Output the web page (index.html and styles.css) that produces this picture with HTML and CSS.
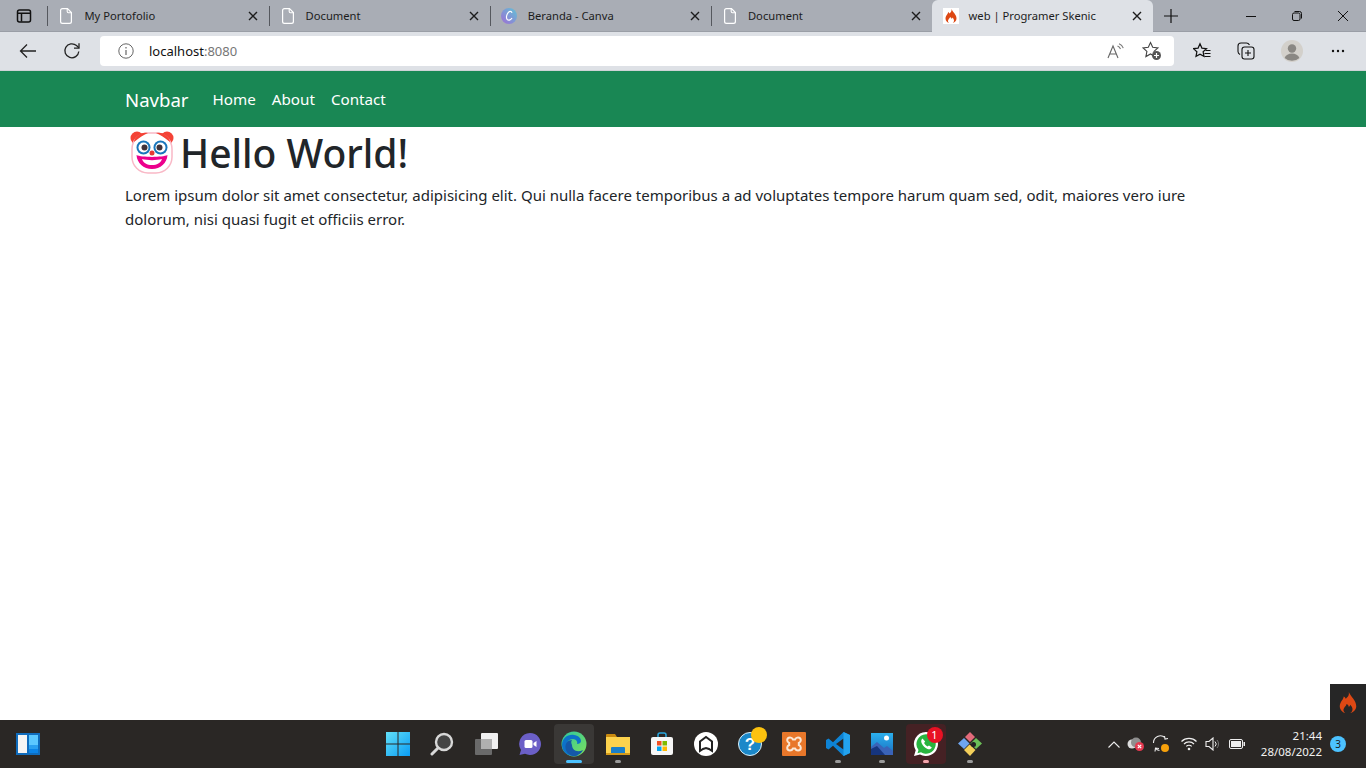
FILE: index.html
```html
<!DOCTYPE html>
<html>
<head>
<meta name="viewport" content="width=device-width, initial-scale=1">
<title>web | Programer Skenic</title>
<link rel="stylesheet" href="styles.css">
</head>
<body>

<svg class="defs" width="0" height="0">
  <symbol id="doc" viewBox="0 0 12 16"><path d="M2.5.6h5L11.4 4.5v9a1.9 1.9 0 0 1-1.9 1.9h-7A1.9 1.9 0 0 1 .6 13.5v-11A1.9 1.9 0 0 1 2.5.6z" fill="none" stroke="#fff" stroke-width="1.2"/><path d="M7.2.6v3a1.2 1.2 0 0 0 1.2 1.2h3" fill="none" stroke="#fff" stroke-width="1.1"/></symbol>
  <symbol id="close" viewBox="0 0 10 10"><path d="M1 1l8 8M9 1L1 9" fill="none" stroke="#1c1c1c" stroke-width="1.4"/></symbol>
</svg>

<!-- browser tabs -->
<div class="tabstrip">
  <div class="tab-menu">
    <svg width="16" height="16" viewBox="0 0 16 16"><rect x="1.5" y="2" width="13" height="12" rx="2" fill="none" stroke="#111" stroke-width="1.5"/><path d="M2 5.2h12M5.5 5v8.5" stroke="#111" stroke-width="1.5"/></svg>
  </div>
  <div class="tab">
    <svg class="favicon-doc" width="12" height="16"><use href="#doc"/></svg>
    <span class="tab-title">My Portofolio</span>
    <svg class="tab-close" width="10" height="10"><use href="#close"/></svg>
  </div>
  <div class="tab">
    <svg class="favicon-doc" width="12" height="16"><use href="#doc"/></svg>
    <span class="tab-title">Document</span>
    <svg class="tab-close" width="10" height="10"><use href="#close"/></svg>
  </div>
  <div class="tab">
    <svg class="favicon" width="16" height="16" viewBox="0 0 16 16">
      <defs><linearGradient id="canva" x1="0" y1="1" x2="1" y2="0"><stop offset="0" stop-color="#a06cd5"/><stop offset="1" stop-color="#5fc3d6"/></linearGradient></defs>
      <circle cx="8" cy="8" r="8" fill="url(#canva)"/>
      <path d="M11 4.800C10.500 3 8.500 3 7 4.800 5.400 6.800 4.800 10.500 6.500 11.800c1.500 1 3.500-.2 4.500-1.800" fill="none" stroke="#fff" stroke-width="1.2"/>
    </svg>
    <span class="tab-title">Beranda - Canva</span>
    <svg class="tab-close" width="10" height="10"><use href="#close"/></svg>
  </div>
  <div class="tab">
    <svg class="favicon-doc" width="12" height="16"><use href="#doc"/></svg>
    <span class="tab-title">Document</span>
    <svg class="tab-close" width="10" height="10"><use href="#close"/></svg>
  </div>
  <div class="tab tab-active">
    <span class="favicon-box">
      <svg width="12" height="14" viewBox="0 0 24 28"><path d="M13 0c1 5-2 7-4 9C8 7 7 6 6 6c1 3-5 7-5 13 0 5 4 8 7 9-2-2-3-4-1-7 1-2 3-3 3-5 2 1 3 2 3 4 1-1 2-2 2-3 2 2 3 4 3 6 0 2-1 4-3 5 4-1 8-4 8-9 0-8-7-12-10-19z" fill="#dd4814"/></svg>
    </span>
    <span class="tab-title">web | Programer Skenic</span>
    <svg class="tab-close" width="10" height="10"><use href="#close"/></svg>
  </div>
  <div class="new-tab">
    <svg width="16" height="16" viewBox="0 0 16 16"><path d="M8 1v14M1 8h14" stroke="#111" stroke-width="1.2"/></svg>
  </div>
  <div class="window-controls">
    <div class="win-btn"><svg width="10" height="10" viewBox="0 0 10 10"><path d="M0 5.5h10" stroke="#111"/></svg></div>
    <div class="win-btn"><svg width="10" height="10" viewBox="0 0 10 10"><rect x=".5" y="2" width="7.5" height="7.5" rx="1.5" fill="none" stroke="#111"/><path d="M2.5 .5h5a2 2 0 0 1 2 2v5" fill="none" stroke="#111"/></svg></div>
    <div class="win-btn"><svg width="10" height="10" viewBox="0 0 10 10"><path d="M0 0l10 10M10 0L0 10" stroke="#111"/></svg></div>
  </div>
</div>

<!-- address bar -->
<div class="toolbar">
  <div class="tool-btn">
    <svg width="18" height="16" viewBox="0 0 18 16"><path d="M17 8H1.5M8 1.500L1.500 8 8 14.500" fill="none" stroke="#222" stroke-width="1.3"/></svg>
  </div>
  <div class="tool-btn">
    <svg width="18" height="18" viewBox="0 0 18 18"><path d="M15.800 9.500A7 7 0 1 1 13.500 3.600L15.800 5.800" fill="none" stroke="#222" stroke-width="1.3"/><path d="M16 1.200v5h-5" fill="none" stroke="#222" stroke-width="1.3"/></svg>
  </div>
  <div class="address">
    <svg class="info" width="16" height="16" viewBox="0 0 16 16"><circle cx="8" cy="8" r="7.2" fill="none" stroke="#666" stroke-width="1"/><path d="M8 7v5M8 4v1.5" stroke="#666" stroke-width="1.2"/></svg>
    <span class="url">localhost<span class="url-port">:8080</span></span>
    <div class="address-icons">
      <svg width="18" height="16" viewBox="0 0 18 16"><path d="M1 15L6 3l5 12M2.800 11h6.400" fill="none" stroke="#666" stroke-width="1.1"/><path d="M10.500 3c1.400.6 2.400 1.600 3 3M12 .8c2 .8 3.500 2.300 4.300 4.300" fill="none" stroke="#777" stroke-width="1.1"/></svg>
      <svg width="20" height="20" viewBox="0 0 20 20"><path d="M8.500 1.500l2.200 4.800 5.200.6-3.900 3.500 1 5.200-4.500-2.600-4.600 2.600 1-5.200L1.100 6.900l5.200-.6z" fill="none" stroke="#444" stroke-width="1.1"/><circle cx="14.5" cy="14.5" r="4.5" fill="#555"/><path d="M14.500 12v5M12 14.500h5" stroke="#fff" stroke-width="1.2"/></svg>
    </div>
  </div>
  <div class="tool-group">
    <div class="tool-btn">
      <svg width="18" height="18" viewBox="0 0 18 18"><path d="M7 1.800l1.900 4.300 4.600.5-3.400 3.100.9 4.600L7 12.100l-4 2.200.9-4.600L.5 6.600l4.600-.5z" fill="none" stroke="#111" stroke-width="1.2"/><path d="M12.500 8.500h5M11.500 11.500h6M11.500 14.500h6" stroke="#111"/></svg>
    </div>
    <div class="tool-btn">
      <svg width="18" height="18" viewBox="0 0 18 18"><rect x="5" y="5" width="12" height="12" rx="2.5" fill="none" stroke="#111" stroke-width="1.1"/><path d="M11 8v6M8 11h6" stroke="#111" stroke-width="1.1"/><path d="M3 12.500C1.800 11.800 1 10.800 1 9.500V4a3 3 0 0 1 3-3h5.500c1.300 0 2.300.8 3 2" fill="none" stroke="#111" stroke-width="1.1"/></svg>
    </div>
    <div class="tool-btn avatar-btn">
      <svg width="22" height="22" viewBox="0 0 22 22"><circle cx="11" cy="11" r="11" fill="#d3d0cb"/><circle cx="11" cy="8.5" r="4.2" fill="#8a8783"/><path d="M3.600 18c1-3 4-4.500 7.400-4.500s6.400 1.500 7.400 4.500a11 11 0 0 1-14.800 0z" fill="#8a8783"/></svg>
    </div>
    <div class="tool-btn">
      <svg width="14" height="4" viewBox="0 0 14 4"><circle cx="2" cy="2" r="1.2" fill="#111"/><circle cx="7" cy="2" r="1.2" fill="#111"/><circle cx="12" cy="2" r="1.2" fill="#111"/></svg>
    </div>
  </div>
</div>

<!-- page -->
<nav class="navbar">
  <div class="container navbar-inner">
    <a class="navbar-brand">Navbar</a>
    <a class="nav-link">Home</a>
    <a class="nav-link">About</a>
    <a class="nav-link">Contact</a>
  </div>
</nav>

<main class="container page">
  <h1 class="title">
    <svg class="clown" width="44" height="44" viewBox="0 0 44 44">
      <circle cx="7" cy="8" r="6.5" fill="#f44336"/>
      <circle cx="37" cy="8" r="6.5" fill="#f44336"/>
      <rect x="2" y="3" width="40" height="40" rx="16" fill="#fff" stroke="#f9b8c6" stroke-width="1.5"/>
      <path d="M8 5.500C10 3 14 2.500 18 3 13 5 9 8 4 12 4 9 6 7 8 5.500zM36 5.500C34 3 30 2.500 26 3c5 2 9 5 14 9 0-3-2-5-4-6.500z" fill="#f44336"/>
      <circle cx="13.5" cy="17.5" r="7" fill="#1976bc"/><circle cx="13.5" cy="17.5" r="5" fill="#fff"/><circle cx="14.5" cy="17.5" r="3" fill="#40333a"/>
      <circle cx="30.5" cy="17.5" r="7" fill="#1976bc"/><circle cx="30.5" cy="17.5" r="5" fill="#fff"/><circle cx="29.5" cy="17.5" r="3" fill="#40333a"/>
      <circle cx="22" cy="23" r="2.5" fill="#e53935"/>
      <path d="M6.500 25c5 2.500 26 2.500 31 0-.5 8-7 14-15.500 14S7 33 6.500 25z" fill="#ec008c"/>
      <path d="M12 29c5 1.500 15 1.500 20 0-1.500 4-5 6-10 6s-8.500-2-10-6z" fill="#fff"/>
    </svg><span>Hello World!</span>
  </h1>
  <p class="lead">Lorem ipsum dolor sit amet consectetur, adipisicing elit. Qui nulla facere temporibus a ad voluptates tempore harum quam sed, odit, maiores vero iure dolorum, nisi quasi fugit et officiis error.</p>
</main>

<!-- debug toolbar button, sits over the page -->
<div class="debug-btn">
  <svg width="18" height="21" viewBox="0 0 24 28"><path d="M13 0c1 5-2 7-4 9C8 7 7 6 6 6c1 3-5 7-5 13 0 5 4 8 7 9-2-2-3-4-1-7 1-2 3-3 3-5 2 1 3 2 3 4 1-1 2-2 2-3 2 2 3 4 3 6 0 2-1 4-3 5 4-1 8-4 8-9 0-8-7-12-10-19z" fill="#dd4814"/></svg>
</div>

<!-- windows taskbar -->
<footer class="taskbar">
  <div class="task-left">
    <svg width="24" height="22" viewBox="0 0 24 22"><rect width="24" height="22" fill="#0f6cbd"/><rect x="2" y="2" width="9" height="18" fill="#f4f4f4"/><rect x="13" y="2" width="9" height="10" fill="#5cc8ff"/><rect x="13" y="12" width="9" height="4" fill="#2aa0f0"/><rect x="13" y="16" width="9" height="4" fill="#0a84e8"/></svg>
  </div>
  <div class="task-center">
    <div class="task-item">
      <svg width="24" height="24" viewBox="0 0 24 24"><defs><linearGradient id="win" x1="0" y1="0" x2="1" y2="1"><stop offset="0" stop-color="#62e0f8"/><stop offset="1" stop-color="#0a9cf5"/></linearGradient></defs><path d="M0 0h11.500v11.500H0zM12.500 0H24v11.500H12.500zM0 12.500h11.500V24H0zM12.500 12.500H24V24H12.500z" fill="url(#win)"/></svg>
    </div>
    <div class="task-item">
      <svg width="24" height="24" viewBox="0 0 24 24"><circle cx="14" cy="10" r="8" fill="#444" stroke="#d8d8d8" stroke-width="2.4"/><path d="M8 16l-6 6" stroke="#d8d8d8" stroke-width="3" stroke-linecap="round"/></svg>
    </div>
    <div class="task-item">
      <svg width="24" height="24" viewBox="0 0 24 24"><rect x="1" y="7" width="17" height="16" rx="1" fill="#6a6a6a"/><rect x="7" y="1" width="17" height="16" rx="1" fill="#f0f0f0"/><rect x="7" y="7" width="11" height="10" fill="#b0b0b0"/></svg>
    </div>
    <div class="task-item">
      <svg width="24" height="24" viewBox="0 0 24 24"><path d="M12 1a11 11 0 1 1-5 20.800L1.500 23 3 18A11 11 0 0 1 12 1z" fill="#6b5fc7"/><rect x="6.5" y="8" width="8" height="8" rx="1.5" fill="#fff"/><path d="M15.500 11l3-2v6l-3-2z" fill="#fff"/></svg>
    </div>
    <div class="task-item task-active">
      <svg width="26" height="26" viewBox="0 0 26 26"><defs><linearGradient id="edge" x1="0" y1="0" x2="1" y2="1"><stop offset="0" stop-color="#2ec7a0"/><stop offset="1" stop-color="#7de05a"/></linearGradient></defs><circle cx="13" cy="13" r="12.5" fill="url(#edge)"/><path d="M1 14C1 7 7 3 13 4c4 .5 7 3 7 6 0 2-2 3-4 3 1-2-1-5-4-5-5 0-7 4-6 9s6 8 12 7c-3 1.500-6 1.500-9 .5C4 23 1 19 1 14z" fill="#0d72c9"/><path d="M11 14c0 5 5 8 11 5-2 4-6 6-10 6-4-1-7-4-7.500-8C4 12 7 9 11 9c-1 1-1 3 0 5z" fill="#1558a8"/></svg>
      <span class="run-bar run-bar-long"></span>
    </div>
    <div class="task-item">
      <svg width="26" height="24" viewBox="0 0 26 24"><path d="M1 3a1 1 0 0 1 1-1h8l2 3h-11z" fill="#c98a10"/><rect x="1" y="5" width="24" height="18" fill="#fcd24d"/><rect x="6" y="15" width="14" height="8" rx="1" fill="#1a7fc9"/><rect x="1" y="21" width="24" height="2" fill="#d49a1a"/></svg>
      <span class="run-bar"></span>
    </div>
    <div class="task-item">
      <svg width="24" height="24" viewBox="0 0 24 24"><path d="M8 6V3a2 2 0 0 1 2-2h4a2 2 0 0 1 2 2v3" fill="none" stroke="#29a8e0" stroke-width="1.5"/><rect x="1" y="5" width="22" height="18" rx="2" fill="#f6f6f6"/><rect x="7" y="9" width="4.5" height="4.5" fill="#f25022"/><rect x="12.5" y="9" width="4.5" height="4.5" fill="#7fba00"/><rect x="7" y="14.5" width="4.5" height="4.5" fill="#00a4ef"/><rect x="12.5" y="14.5" width="4.5" height="4.5" fill="#ffb900"/></svg>
    </div>
    <div class="task-item">
      <svg width="24" height="24" viewBox="0 0 24 24"><circle cx="12" cy="12" r="12" fill="#fff"/><path d="M6 19V9.500L12 5l6 4.500V19l-3-2-3-1-3 1z" fill="none" stroke="#222" stroke-width="2"/></svg>
    </div>
    <div class="task-item">
      <svg width="24" height="24" viewBox="0 0 24 24"><circle cx="12" cy="12" r="11.5" fill="#1b88c9" stroke="#dff2fb" stroke-width="1"/><text x="12" y="18" class="help-mark">?</text></svg>
      <span class="help-dot"></span>
    </div>
    <div class="task-item">
      <svg width="24" height="24" viewBox="0 0 24 24"><rect width="24" height="24" rx="1" fill="#e8772a"/><path d="M8 5.500c1.500 0 2.500 1 3 2h2c.5-1 1.500-2 3-2 1.700 0 2.800 1.300 2.800 2.800 0 1.400-1 2.300-2 2.700v2c1 .4 2 1.300 2 2.700 0 1.500-1.100 2.800-2.800 2.800-1.500 0-2.500-1-3-2h-2c-.5 1-1.500 2-3 2-1.700 0-2.800-1.300-2.800-2.800 0-1.400 1-2.300 2-2.700v-2c-1-.4-2-1.300-2-2.700C5.200 6.800 6.300 5.500 8 5.500z" fill="none" stroke="#fbe7d4" stroke-width="2"/></svg>
    </div>
    <div class="task-item">
      <svg width="24" height="24" viewBox="0 0 24 24"><path d="M17.500 0L24 3v18l-6.500 3L7 13.800 2.500 17.500 0 16V8l2.500-1.500L7 10.200z" fill="#0e83d4"/><path d="M17.500 6.500L10 12l7.500 5.500z" fill="#2a2725"/><path d="M17.500 0L24 3v18l-6.500 3z" fill="#23a3ee"/></svg>
      <span class="run-bar"></span>
    </div>
    <div class="task-item">
      <svg width="24" height="24" viewBox="0 0 24 24"><defs><linearGradient id="sky" x1="0" y1="0" x2="0" y2="1"><stop offset="0" stop-color="#2bb0ee"/><stop offset="1" stop-color="#1a6fc0"/></linearGradient></defs><rect x="1" y="1" width="22" height="22" fill="url(#sky)"/><circle cx="16.5" cy="6" r="2.5" fill="#fff"/><path d="M1 23V15l6-5 7 6 3-2 6 5v4z" fill="#3a63b8"/><path d="M1 23v-6l6-3 8 9z" fill="#16357e"/></svg>
      <span class="run-bar"></span>
    </div>
    <div class="task-item task-alert">
      <svg width="26" height="26" viewBox="0 0 26 26"><path d="M13 1a12 12 0 1 1-6 22.400L1 25l1.700-5.800A12 12 0 0 1 13 1z" fill="#fff"/><path d="M13 3.300a9.700 9.700 0 1 1-5 18l-3.500 1 1-3.400A9.700 9.700 0 0 1 13 3.300z" fill="#29b43f"/><path d="M9.500 7.500c-1.500 1-1.700 3-.7 5 1.200 2.500 3.200 4.500 5.700 5.500 2 .7 3.600 0 4.300-1.500l-2.800-2-1.500 1c-1.500-.7-2.700-1.900-3.400-3.400l1-1.500z" fill="#fff"/></svg>
      <span class="alert-count">1</span>
      <span class="run-bar run-bar-pink"></span>
    </div>
    <div class="task-item">
      <svg width="24" height="24" viewBox="0 0 24 24"><path d="M12 0l5 5-5 5-5-5z" fill="#e26a7a"/><path d="M6 6l5.500 5.500L6 17l-6-5.500z" fill="#6ea5ef"/><path d="M18 6l6 5.500-6 5.500-5.500-5.500z" fill="#6cbf58"/><path d="M6 18l5.500-5.500L17.500 18 12 24z" fill="#f3cf5a"/><circle cx="15.5" cy="12.5" r="2.5" fill="#222"/></svg>
      <span class="run-bar"></span>
    </div>
  </div>
  <div class="tray">
    <svg class="tray-chevron" width="12" height="7" viewBox="0 0 12 7"><path d="M.5 6.500L6 1l5.500 5.500" fill="none" stroke="#eee" stroke-width="1.1"/></svg>
    <span class="tray-cell tray-cloud">
      <svg width="18" height="14" viewBox="0 0 18 14"><circle cx="5" cy="7" r="4.5" fill="#dcdcdc"/><circle cx="9" cy="5.5" r="5" fill="#8f8f8f"/><circle cx="12.5" cy="9.5" r="4.5" fill="#e53950"/><path d="M10.800 7.800l3.400 3.400M14.200 7.800l-3.400 3.400" stroke="#fff" stroke-width="1.2"/></svg>
    </span>
    <span class="tray-cell tray-sync">
      <svg width="18" height="18" viewBox="0 0 18 18"><path d="M1.500 8A7 7 0 0 1 13 2.500M16 3.500l-3 .5-.5-3M3 16.500l.5-3.500 3.500.5M3.500 13a5 5 0 0 0 4 2.500" fill="none" stroke="#eee" stroke-width="1.1"/><circle cx="13" cy="13" r="4" fill="#f7a10b"/></svg>
    </span>
    <span class="tray-cell tray-wifi">
      <svg width="16" height="14" viewBox="0 0 16 14"><path d="M.5 4.500a10.500 10.500 0 0 1 15 0M3 7a7 7 0 0 1 10 0M5.300 9.400a3.800 3.800 0 0 1 5.400 0" fill="none" stroke="#eee" stroke-width="1.2"/><circle cx="8" cy="12" r="1.3" fill="#eee"/></svg>
    </span>
    <span class="tray-cell tray-sound">
      <svg width="16" height="14" viewBox="0 0 16 14"><path d="M1 4.500h3L8 1v12L4 9.500H1z" fill="none" stroke="#eee" stroke-width="1.1"/><path d="M10 4.500a3.500 3.500 0 0 1 0 5" fill="none" stroke="#eee"/><path d="M12 3a6 6 0 0 1 0 8" fill="none" stroke="#777"/></svg>
    </span>
    <span class="tray-cell tray-battery">
      <svg width="16" height="10" viewBox="0 0 16 10"><rect x=".5" y=".5" width="13" height="9" rx="1.5" fill="none" stroke="#eee"/><rect x="2" y="2" width="10" height="6" fill="#eee"/><rect x="14.5" y="3" width="1.5" height="4" fill="#eee"/></svg>
    </span>
    <div class="clock">
      <span>21:44</span>
      <span>28/08/2022</span>
    </div>
    <span class="notify">3</span>
  </div>
</footer>

</body>
</html>
```

FILE: styles.css
```css
* {
  box-sizing: border-box;
}

html, body {
  height: 100%;
}

body {
  margin: 0;
  display: flex;
  flex-direction: column;
  overflow: hidden;
  font-family: "Noto Sans", "Open Sans", Arial, sans-serif;
  color: #212529;
  background-color: white;
}

.defs {
  position: absolute;
}

/* tab strip */
.tabstrip {
  height: 32px;
  flex: none;
  display: flex;
  background-color: #a9adb5;
  border-bottom: 1px solid #9a9ea6;
}

.tab-menu {
  width: 47.4px;
  display: flex;
  align-items: center;
  padding-left: 16px;
}

.tab {
  width: 221.2px;
  height: 32px;
  display: flex;
  align-items: center;
  padding-left: 13px;
  position: relative;
  font-size: 11.2px;
  color: #1c1c1c;
}

.tab::before {
  content: "";
  position: absolute;
  left: 0;
  top: 6px;
  bottom: 6px;
  width: 1px;
  background-color: #55585e;
}

.tab-active {
  background-color: #dee1e6;
  border-radius: 6px 6px 0 0;
  padding-left: 10.4px;
}

.tab-active::before {
  display: none;
}

.favicon-doc {
  margin-right: 12px;
}

.favicon {
  margin-right: 11px;
  margin-left: -2px;
}

.favicon-box {
  width: 16px;
  height: 16px;
  margin-right: 10px;
  background-color: white;
  display: flex;
  align-items: center;
  justify-content: center;
}

.tab-title {
  flex: 1;
  margin-top: -2px;
  white-space: nowrap;
}

.tab-close {
  margin-right: 11px;
}

.new-tab {
  width: 36px;
  display: flex;
  align-items: center;
  justify-content: center;
}

.window-controls {
  margin-left: auto;
  display: flex;
}

.win-btn {
  width: 46px;
  display: flex;
  align-items: center;
  justify-content: center;
}

/* address bar */
.toolbar {
  height: 39px;
  flex: none;
  display: flex;
  align-items: center;
  background-color: #dee1e6;
  padding: 0 6px;
  border-bottom: 1px solid #cfd2d6;
}

.tool-btn {
  width: 44px;
  height: 30px;
  display: flex;
  align-items: center;
  justify-content: center;
}

.avatar-btn {
  width: 48px;
}

.address {
  flex: 1;
  height: 30px;
  margin-left: 6px;
  display: flex;
  align-items: center;
  background-color: white;
  border-radius: 4px;
  padding: 0 12px 0 18px;
  font-size: 13px;
}

.info {
  margin-right: 15px;
}

.url {
  color: #111;
}

.url-port {
  color: #767676;
}

.address-icons {
  margin-left: auto;
  display: flex;
  align-items: center;
  gap: 17px;
}

.tool-group {
  display: flex;
  margin-left: 6px;
}

/* navbar */
.container {
  width: 1140px;
  margin: 0 auto;
  padding: 0 12px;
}

.navbar {
  height: 56px;
  flex: none;
  background-color: #198754;
  color: white;
}

.navbar-inner {
  height: 100%;
  display: flex;
  align-items: center;
}

.navbar-brand {
  font-size: 18.6px;
  margin-right: 24px;
}

.nav-link {
  font-size: 15.2px;
  margin-right: 16px;
}

/* page */
.page {
  flex: 1;
}

.title {
  margin: 0 0 8px;
  height: 48px;
  padding-top: 3px;
  display: flex;
  align-items: center;
  font-size: 39px;
  font-weight: 500;
  line-height: 48px;
}

.clown {
  margin: -2px 6px 0 5px;
}

.lead {
  margin: 0;
  font-size: 15px;
  line-height: 24px;
}

.debug-btn {
  position: absolute;
  right: 0;
  bottom: 48px;
  width: 36px;
  height: 36px;
  background-color: #262626;
  display: flex;
  align-items: center;
  justify-content: center;
}

/* taskbar */
.taskbar {
  height: 48px;
  flex: none;
  display: grid;
  grid-template-columns: 1fr auto 1fr;
  align-items: center;
  background-color: #2a2725;
  color: #f2f2f2;
}

.task-left {
  padding-left: 16px;
  display: flex;
}

.task-center {
  display: flex;
  margin-left: 1px;
}

.task-item {
  width: 44px;
  height: 40px;
  display: flex;
  align-items: center;
  justify-content: center;
  position: relative;
}

.task-active {
  background-color: #3a3836;
  border-radius: 4px;
  width: 40px;
  margin: 0 2px;
}

.task-alert {
  background-color: #452124;
  border-radius: 4px;
  width: 40px;
  margin: 0 2px;
}

.run-bar {
  position: absolute;
  left: 50%;
  bottom: 1px;
  width: 6px;
  height: 3px;
  margin-left: -3px;
  border-radius: 2px;
  background-color: #9a9a9a;
}

.run-bar-long {
  width: 16px;
  margin-left: -8px;
  background-color: #4cc2ff;
}

.run-bar-pink {
  background-color: #f4a6ad;
}

.help-mark {
  font-family: "Liberation Sans", sans-serif;
  font-size: 17px;
  font-weight: 700;
  fill: white;
  text-anchor: middle;
}

.help-dot {
  position: absolute;
  top: 3px;
  right: 5px;
  width: 16px;
  height: 16px;
  border-radius: 50%;
  background-color: #fcc20f;
}

.alert-count {
  position: absolute;
  top: 3px;
  right: 3px;
  width: 16px;
  height: 16px;
  border-radius: 50%;
  background-color: #e81123;
  color: white;
  font-size: 11px;
  line-height: 16px;
  text-align: center;
}

.tray {
  display: flex;
  align-items: center;
  justify-content: flex-end;
  padding-right: 20px;
}

.tray-chevron {
  margin-right: 7px;
}

.tray-cell {
  display: flex;
}

.tray-cloud {
  margin-right: 7px;
}

.tray-sync {
  margin-right: 11px;
}

.tray-wifi {
  margin-right: 8px;
}

.tray-sound {
  margin-right: 8px;
}

.clock {
  margin-left: 16px;
  display: flex;
  flex-direction: column;
  align-items: flex-end;
  font-size: 11.5px;
  line-height: 16px;
}

.notify {
  margin-left: 8px;
  width: 16px;
  height: 16px;
  border-radius: 50%;
  background-color: #4cc2ff;
  color: #1a1a1a;
  font-size: 10px;
  line-height: 16px;
  text-align: center;
}
```
